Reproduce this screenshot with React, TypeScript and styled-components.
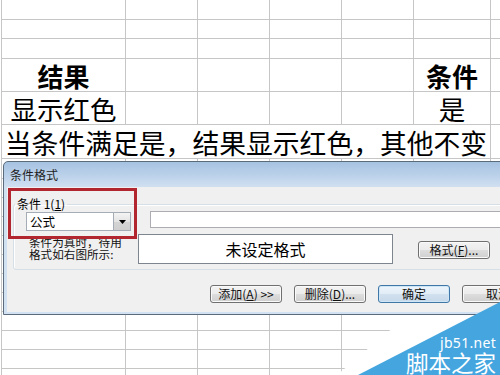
import React from "react";
import styled, { createGlobalStyle } from "styled-components";

const Global = createGlobalStyle`
  html, body { margin: 0; padding: 0; background: #fff; }
  body { font-family: "Noto Sans CJK SC", "Noto Sans", sans-serif; color: #000; }
  * { box-sizing: border-box; }
`;

const Page = styled.div`
  position: relative;
  width: 500px;
  height: 375px;
  overflow: hidden;
  background: #fff;
`;

const Sheet = styled.div`
  display: grid;
  margin-left: 1px;
  border-left: 1px solid #c6c6c6;
  grid-template-columns: 124px 72px 72px 72px 72px 77px 40px;
  grid-template-rows: 20px 19px 20px 33px 33px 34px 20px repeat(11, 19px);
`;

const Cell = styled.div<{ $span?: number; $bold?: boolean; $size?: number }>`
  grid-column: span ${(p) => p.$span || 1};
  border-right: 1px solid #c6c6c6;
  border-bottom: 1px solid #c6c6c6;
  display: flex;
  align-items: flex-end;
  justify-content: center;
  font-family: "Noto Sans CJK SC", sans-serif;
  font-size: ${(p) => p.$size || 26}px;
  font-weight: ${(p) => (p.$bold ? 700 : 400)};
  line-height: 30px;
  white-space: nowrap;
`;

const Dialog = styled.div`
  position: absolute;
  left: 3px;
  top: 161px;
  width: 580px;
  border: 1px solid #5b6b7c;
  border-radius: 5px 5px 0 0;
  padding: 0 3px 2px 3px;
  background: linear-gradient(
    to bottom,
    #a6c2e1 0px,
    #bcd2ea 14px,
    #d1e0f1 25px,
    #d3e2f2 100%
  );
`;

const TitleBar = styled.div`
  height: 25px;
  display: flex;
  align-items: center;
  padding-left: 3px;
  font-size: 12px;
  color: #1e1e1e;
`;

const Body = styled.div`
  height: 125px;
  background: #f0f0f0;
  display: flex;
  flex-direction: column;
  align-items: flex-start;
`;

const Group = styled.fieldset`
  margin: 10px 0 0 6px;
  padding: 0 0 5px 0;
  width: 600px;
  min-width: 0;
  border: 1px solid #d5dfe5;
  border-radius: 3px;
  box-shadow: inset 1px 1px 0 #fff;
`;

const Legend = styled.legend`
  margin-left: 1px;
  padding: 0 2px;
  font-size: 12px;
  line-height: 14px;
  white-space: pre;
`;

const Row = styled.div<{ $top: number }>`
  display: flex;
  align-items: flex-start;
  margin-top: ${(p) => p.$top}px;
`;

const Combo = styled.div`
  margin-left: 12px;
  width: 105px;
  height: 19px;
  border: 1px solid #a5acb5;
  background: #fff;
  display: flex;
  align-items: center;
  font-size: 12.5px;
  padding-left: 3px;
`;

const ComboText = styled.span`
  flex: 1;
  line-height: 17px;
`;

const ComboButton = styled.div`
  width: 17px;
  height: 17px;
  border-left: 1px solid #a5acb5;
  background: linear-gradient(#f4f4f4, #e4e4e4 50%, #d4d4d4 51%, #cfcfcf);
  display: flex;
  align-items: center;
  justify-content: center;
`;

const Field = styled.div`
  margin-left: 19px;
  margin-top: -1px;
  width: 420px;
  height: 17px;
  border: 1px solid #abadb3;
  background: #fff;
`;

const Desc = styled.div`
  margin-left: 15px;
  margin-top: 3px;
  width: 109px;
  font-size: 11.6px;
  line-height: 11.5px;
  white-space: nowrap;
  color: #111;
`;

const Preview = styled.div`
  width: 255px;
  height: 30px;
  border: 1px solid #7f858f;
  background: #fff;
  display: flex;
  align-items: center;
  justify-content: center;
  font-size: 16px;
`;

const Buttons = styled.div`
  display: flex;
  gap: 12px;
  margin: 15px 0 0 203px;
`;

const Button = styled.div<{ $default?: boolean; $top?: number; $left?: number }>`
  width: 72px;
  height: 18px;
  margin-top: ${(p) => p.$top || 0}px;
  margin-left: ${(p) => p.$left || 0}px;
  flex-shrink: 0;
  border: 1px solid ${(p) => (p.$default ? "#3f78a6" : "#707070")};
  border-radius: 3px;
  background: ${(p) =>
    p.$default
      ? "linear-gradient(#eef5fb, #e1ecf6 50%, #d2e1ef 51%, #c6d8ea)"
      : "linear-gradient(#f3f3f3, #ebebeb 50%, #dddddd 51%, #cfcfcf)"};
  box-shadow: inset 0 0 0 1px ${(p) => (p.$default ? "#cfe6f7" : "#fafafa")};
  display: flex;
  align-items: center;
  justify-content: center;
  font-size: 12px;
  line-height: 16px;
  white-space: nowrap;
  color: #111;
`;

const Highlight = styled.div`
  position: absolute;
  left: 8px;
  top: 188px;
  width: 129px;
  height: 51px;
  border: 3px solid #b2262f;
  pointer-events: none;
`;

const Watermark = styled.div`
  position: absolute;
  left: 330px;
  top: 280px;
  width: 170px;
  height: 95px;
  pointer-events: none;
`;

const WmShape = styled.svg`
  display: block;
`;

const WmSite = styled.div`
  position: absolute;
  left: 110px;
  top: 55px;
  font-family: "Noto Sans", sans-serif;
  font-size: 14px;
  line-height: 16px;
  color: #fff;
  letter-spacing: 0.3px;
`;

const WmName = styled.div`
  position: absolute;
  left: 76px;
  top: 70px;
  font-family: "Noto Sans CJK SC", sans-serif;
  font-size: 22.5px;
  line-height: 25px;
  color: #fff;
  white-space: nowrap;
`;

type CellDef = { text?: string; bold?: boolean; span?: number; size?: number };

const rows: CellDef[][] = [];
for (let r = 0; r < 18; r++) {
  if (r === 3) {
    rows.push([{ text: "结果", bold: true }, {}, {}, {}, {}, { text: "条件", bold: true }, {}]);
  } else if (r === 4) {
    rows.push([{ text: "显示红色", size: 26.5 }, {}, {}, {}, {}, { text: "是", size: 26.5 }, {}]);
  } else if (r === 5) {
    rows.push([{ text: "当条件满足是，结果显示红色，其他不变", span: 6, size: 26.8 }, {}]);
  } else {
    rows.push([{}, {}, {}, {}, {}, {}, {}]);
  }
}

export default function App() {
  return (
    <Page>
      <Global />
      <Sheet>
        {rows.map((row, r) =>
          row.map((c, i) => (
            <Cell key={`${r}-${i}`} $span={c.span} $bold={c.bold} $size={c.size}>
              {c.text}
            </Cell>
          ))
        )}
      </Sheet>

      <Dialog>
        <TitleBar>条件格式</TitleBar>
        <Body>
          <Group>
            <Legend>
              条件 1(<u>1</u>)
            </Legend>
            <Row $top={1}>
              <Combo>
                <ComboText>公式</ComboText>
                <ComboButton>
                  <svg width="7" height="4" viewBox="0 0 7 4">
                    <path d="M0 0 H7 L3.5 4 Z" fill="#000" />
                  </svg>
                </ComboButton>
              </Combo>
              <Field />
            </Row>
            <Row $top={3}>
              <Desc>
                条件为真时，待用
                <br />
                格式如右图所示:
              </Desc>
              <Preview>未设定格式</Preview>
              <Button $top={7} $left={25}>
                格式(<u>F</u>)...
              </Button>
            </Row>
          </Group>
          <Buttons>
            <Button>
              添加(<u>A</u>) &gt;&gt;
            </Button>
            <Button>
              删除(<u>D</u>)...
            </Button>
            <Button $default>确定</Button>
            <Button>取消</Button>
          </Buttons>
        </Body>
      </Dialog>

      <Highlight />

      <Watermark>
        <WmShape width="170" height="95" viewBox="0 0 170 95">
          <polygon points="7,95 78,35 170,35 170,95" fill="#fff" />
          <polygon points="28,95 170,22 170,95" fill="#45a6df" />
        </WmShape>
        <WmSite>jb51.net</WmSite>
        <WmName>脚本之家</WmName>
      </Watermark>
    </Page>
  );
}
